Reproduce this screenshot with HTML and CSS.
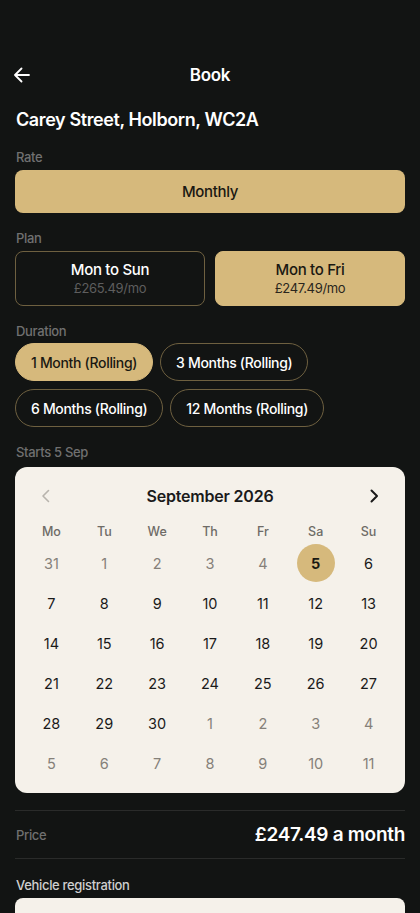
FILE: index.html
```html
<!DOCTYPE html>
<html lang="en">
<head>
<meta charset="utf-8">
<title>Book</title>
<link rel="stylesheet" href="styles.css">
</head>
<body>
<div class="screen">
  <header class="topbar">
    <button class="back" aria-label="Back">
      <svg width="16" height="16" viewBox="0 0 16 16" fill="none" stroke="#fff" stroke-width="1.8" stroke-linecap="round" stroke-linejoin="round"><path d="M15 8H1.5M7.5 1.5L1 8l6.5 6.5"/></svg>
    </button>
    <h1 class="title">Book</h1>
  </header>

  <h2 class="address">Carey Street, Holborn, WC2A</h2>

  <div class="label">Rate</div>
  <div class="rate">Monthly</div>

  <div class="label">Plan</div>
  <div class="plans">
    <div class="plan">
      <div class="plan-name">Mon to Sun</div>
      <div class="plan-price">£265.49/mo</div>
    </div>
    <div class="plan active">
      <div class="plan-name">Mon to Fri</div>
      <div class="plan-price">£247.49/mo</div>
    </div>
  </div>

  <div class="label">Duration</div>
  <div class="pills">
    <div class="pill active">1 Month (Rolling)</div>
    <div class="pill">3 Months (Rolling)</div>
    <div class="pill">6 Months (Rolling)</div>
    <div class="pill">12 Months (Rolling)</div>
  </div>

  <div class="label">Starts 5 Sep</div>
  <div class="calendar">
    <div class="cal-head">
      <span class="chev dim"><svg width="10" height="14" viewBox="0 0 10 14" fill="none" stroke="currentColor" stroke-width="1.6" stroke-linecap="round" stroke-linejoin="round"><path d="M7.5 1.5L2 7l5.5 5.5"/></svg></span>
      <span class="month">September 2026</span>
      <span class="chev"><svg width="10" height="14" viewBox="0 0 10 14" fill="none" stroke="currentColor" stroke-width="2" stroke-linecap="round" stroke-linejoin="round"><path d="M2.5 1.5L8 7l-5.5 5.5"/></svg></span>
    </div>
    <div class="weekdays">
      <div class="wd">Mo</div><div class="wd">Tu</div><div class="wd">We</div><div class="wd">Th</div><div class="wd">Fr</div><div class="wd">Sa</div><div class="wd">Su</div>
    </div>
    <div class="grid">
      <div class="d out">31</div><div class="d out">1</div><div class="d out">2</div><div class="d out">3</div><div class="d out">4</div><div class="d sel"><span>5</span></div><div class="d">6</div>
      <div class="d">7</div><div class="d">8</div><div class="d">9</div><div class="d">10</div><div class="d">11</div><div class="d">12</div><div class="d">13</div>
      <div class="d">14</div><div class="d">15</div><div class="d">16</div><div class="d">17</div><div class="d">18</div><div class="d">19</div><div class="d">20</div>
      <div class="d">21</div><div class="d">22</div><div class="d">23</div><div class="d">24</div><div class="d">25</div><div class="d">26</div><div class="d">27</div>
      <div class="d">28</div><div class="d">29</div><div class="d">30</div><div class="d out">1</div><div class="d out">2</div><div class="d out">3</div><div class="d out">4</div>
      <div class="d out">5</div><div class="d out">6</div><div class="d out">7</div><div class="d out">8</div><div class="d out">9</div><div class="d out">10</div><div class="d out">11</div>
    </div>
  </div>

  <div class="price-row">
    <span class="price-label">Price</span>
    <span class="price-value">£247.49 a month</span>
  </div>

  <div class="label reg">Vehicle registration</div>
  <div class="input"></div>
</div>
</body>
</html>
```

FILE: styles.css
```css
* { box-sizing: border-box; }
html, body { margin: 0; padding: 0; }
body {
  background: #121413;
  font-family: Inter, "Noto Sans", "Liberation Sans", sans-serif;
  color: #fff;
  width: 420px;
  height: 913px;
  overflow: hidden;
  letter-spacing: -0.02em;
}
.screen { padding: 56px 15px 0 15px; }

.topbar {
  position: relative;
  height: 38px;
  display: flex;
  align-items: center;
  justify-content: center;
}
.back {
  position: absolute;
  left: -1px;
  top: 11px;
  background: none;
  border: 0;
  padding: 0;
  width: 16px;
  height: 16px;
  display: flex;
}
.title {
  margin: 0;
  font-size: 17px;
  font-weight: 600;
}
.address {
  margin: 14px 0 0 1px;
  font-size: 18px;
  font-weight: 600;
  line-height: 24px;
  letter-spacing: -0.4px;
}
.label {
  color: #707070;
  font-size: 13px;
  font-weight: 500;
  line-height: 16px;
  margin: 17px 0 5px 1px;
}
.rate {
  height: 43px;
  border-radius: 8px;
  background: #d6b97c;
  color: #1a1812;
  font-size: 15px;
  font-weight: 500;
  display: flex;
  align-items: center;
  justify-content: center;
}
.plans {
  display: grid;
  grid-template-columns: 1fr 1fr;
  gap: 10px;
}
.plan {
  height: 55px;
  border: 1px solid #6e6040;
  border-radius: 8px;
  display: flex;
  flex-direction: column;
  align-items: center;
  justify-content: center;
}
.plan-name { font-size: 15px; font-weight: 500; line-height: 19px; }
.plan-price { font-size: 13px; color: #5e5e5e; line-height: 17px; margin-top: 1px; }
.plan.active { background: #d6b97c; border-color: #d6b97c; color: #1a1812; }
.plan.active .plan-price { color: #2a261d; }

.pills {
  display: flex;
  flex-wrap: wrap;
  gap: 8px 7px;
  width: 320px;
  margin-top: -1px;
}
.pill {
  height: 38px;
  padding: 0 15px;
  border: 1px solid #6e6040;
  border-radius: 19px;
  display: flex;
  align-items: center;
  font-size: 14px;
  font-weight: 500;
  white-space: nowrap;
}
.pill.active { background: #d6b97c; border-color: #d6b97c; color: #1a1812; }

.calendar {
  background: #f5f1ea;
  border-radius: 12px;
  padding: 16px 10px 10px;
  color: #1a1a1a;
  margin-top: 7px;
}
.cal-head {
  display: flex;
  align-items: center;
  justify-content: space-between;
  padding: 0 16px;
  height: 26px;
}
.month { font-size: 16px; font-weight: 600; letter-spacing: -0.2px; }
.chev { display: flex; color: #1a1a1a; }
.chev.dim { color: #b8b4ad; }
.weekdays {
  display: grid;
  grid-template-columns: repeat(7, 1fr);
  height: 24px;
  margin-top: 10px;
}
.wd {
  display: flex;
  align-items: center;
  justify-content: center;
  font-size: 12.5px;
  color: #6e6b66;
  font-weight: 500;
  letter-spacing: 0;
}
.grid {
  display: grid;
  grid-template-columns: repeat(7, 1fr);
  grid-auto-rows: 40px;
}
.d {
  display: flex;
  align-items: center;
  justify-content: center;
  font-size: 14.5px;
  color: #1a1a1a;
  letter-spacing: 0;
}
.d.out { color: #858079; }
.d.sel span {
  width: 38px;
  height: 38px;
  border-radius: 50%;
  background: #d6b97c;
  display: flex;
  align-items: center;
  justify-content: center;
  font-weight: 700;
  color: #1a1812;
}

.price-row {
  margin-top: 17px;
  border-top: 1px solid #2a2b2a;
  border-bottom: 1px solid #2a2b2a;
  height: 49px;
  display: flex;
  align-items: center;
  justify-content: space-between;
}
.price-label { color: #707070; font-size: 13px; font-weight: 500; padding-left: 1px; }
.price-value { font-size: 19px; font-weight: 600; letter-spacing: -0.3px; }
.label.reg { color: #cfcfcf; margin-top: 18px; margin-bottom: 0; }
.input {
  height: 44px;
  background: #f5f1ea;
  border-radius: 8px;
  margin-top: 5px;
}
```
